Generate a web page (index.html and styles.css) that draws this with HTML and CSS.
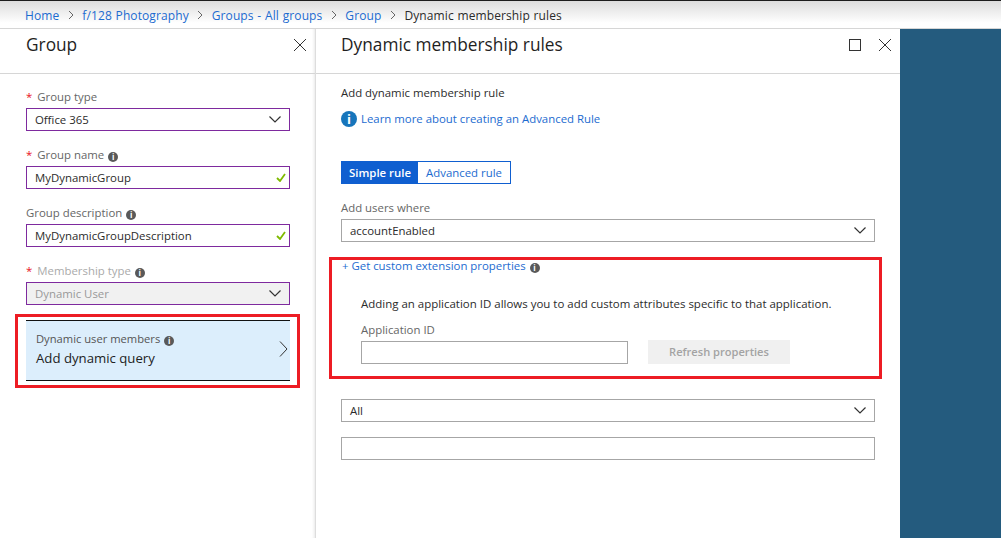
FILE: index.html
```html
<!DOCTYPE html>
<html lang="en">
<head>
  <meta charset="UTF-8">
  <title>Dynamic membership rules</title>
  <link rel="stylesheet" href="styles.css">
</head>
<body>
  <nav class="crumbs">
    <a href="#">Home</a>
    <svg class="crumb-sep" viewBox="0 0 6 10"><path d="M1 1l4 4-4 4"/></svg>
    <a href="#">f/128 Photography</a>
    <svg class="crumb-sep" viewBox="0 0 6 10"><path d="M1 1l4 4-4 4"/></svg>
    <a href="#">Groups - All groups</a>
    <svg class="crumb-sep" viewBox="0 0 6 10"><path d="M1 1l4 4-4 4"/></svg>
    <a href="#">Group</a>
    <svg class="crumb-sep" viewBox="0 0 6 10"><path d="M1 1l4 4-4 4"/></svg>
    <span>Dynamic membership rules</span>
  </nav>

  <div class="main">
    <section class="blade blade-left">
      <header class="blade-head">
        <h2>Group</h2>
        <svg class="head-icon" viewBox="0 0 12 12"><path d="M0 0l12 12M12 0L0 12"/></svg>
      </header>
      <div class="blade-body form">
        <div class="field">
          <div class="label"><span class="star">*</span>Group type</div>
          <div class="box purple">Office 365
            <svg class="chev" viewBox="0 0 12 7"><path d="M.5.5L6 6 11.5.5"/></svg>
          </div>
        </div>
        <div class="field">
          <div class="label"><span class="star">*</span>Group name <span class="info">i</span></div>
          <div class="box purple">MyDynamicGroup
            <svg class="check" viewBox="0 0 10 9"><path d="M1 5l3 3 5-7"/></svg>
          </div>
        </div>
        <div class="field">
          <div class="label">Group description <span class="info">i</span></div>
          <div class="box purple">MyDynamicGroupDescription
            <svg class="check" viewBox="0 0 10 9"><path d="M1 5l3 3 5-7"/></svg>
          </div>
        </div>
        <div class="field">
          <div class="label muted"><span class="star">*</span>Membership type <span class="info">i</span></div>
          <div class="box purple disabled">Dynamic User
            <svg class="chev" viewBox="0 0 12 7"><path d="M.5.5L6 6 11.5.5"/></svg>
          </div>
        </div>
        <div class="query">
          <div>
            <div class="query-label">Dynamic user members <span class="info">i</span></div>
            <div class="query-value">Add dynamic query</div>
          </div>
          <svg class="query-arrow" viewBox="0 0 9 16"><path d="M1 .5L8 8l-7 7.5"/></svg>
        </div>
      </div>
    </section>

    <section class="blade blade-right">
      <header class="blade-head">
        <h2>Dynamic membership rules</h2>
        <span class="maximize"></span>
        <svg class="head-icon" viewBox="0 0 12 12"><path d="M0 0l12 12M12 0L0 12"/></svg>
      </header>
      <div class="blade-body rules">
        <div class="rule-title">Add dynamic membership rule</div>
        <div class="learn">
          <span class="info-big">i</span>
          <a href="#">Learn more about creating an Advanced Rule</a>
        </div>
        <div class="toggle">
          <span class="toggle-on">Simple rule</span>
          <span class="toggle-off">Advanced rule</span>
        </div>
        <div class="label where">Add users where</div>
        <div class="box grey">accountEnabled
          <svg class="chev" viewBox="0 0 12 7"><path d="M.5.5L6 6 11.5.5"/></svg>
        </div>
        <div class="custom-link"><a href="#">+ Get custom extension properties</a> <span class="info">i</span></div>
        <div class="custom">
          <div class="custom-text">Adding an application ID allows you to add custom attributes specific to that application.</div>
          <div class="label app-label">Application ID</div>
          <div class="app-row">
            <div class="box grey app-input"></div>
            <div class="refresh">Refresh properties</div>
          </div>
        </div>
        <div class="box grey all">All
          <svg class="chev" viewBox="0 0 12 7"><path d="M.5.5L6 6 11.5.5"/></svg>
        </div>
        <div class="box grey last"></div>
      </div>
    </section>

    <div class="backdrop"></div>
  </div>

  <!-- red annotation boxes drawn on top of the screenshot -->
  <div class="mark mark-query"></div>
  <div class="mark mark-custom"></div>
</body>
</html>
```

FILE: styles.css
```css
* {
  margin: 0;
  padding: 0;
  box-sizing: border-box;
}

body {
  width: 1001px;
  height: 538px;
  overflow: hidden;
  background-color: #fff;
  color: #2b2b2b;
  font-family: "Open Sans", "Liberation Sans", sans-serif;
  font-size: 11.4px;
}

a {
  color: #1c6bd0;
  text-decoration: none;
}

/* Breadcrumb */
.crumbs {
  height: 29px;
  padding: 1px 0 0 25px;
  display: flex;
  align-items: center;
  gap: 8.5px;
  border-top: 1px solid #1c1c1c;
  border-bottom: 1px solid #d6d6d6;
  background: linear-gradient(#dcdcdc, #fff 22px);
  font-size: 12px;
  letter-spacing: .1px;
  word-spacing: .5px;
  white-space: nowrap;
}

.crumb-sep {
  width: 6px;
  height: 10px;
  fill: none;
  stroke: #666;
}

/* Blades */
.main {
  display: flex;
  height: 509px;
}

.blade {
  display: flex;
  flex-direction: column;
}

.blade-left {
  width: 316px;
  border-right: 1px solid #ddd;
  box-shadow: inset -3px 0 3px -2px #e8e8e8;
}

.blade-right {
  width: 584px;
}

.blade-head {
  height: 45px;
  padding: 0 9px 12px 26px;
  display: flex;
  align-items: center;
  border-bottom: 1px solid #d6d6d6;
}

.blade-right .blade-head {
  padding-left: 25px;
}

.blade-head h2 {
  flex: 1;
  margin-top: -2px;
  font-size: 17.3px;
  font-weight: 400;
  color: #1f1f1f;
}

.head-icon {
  width: 12px;
  height: 12px;
  fill: none;
  stroke: #333;
}

.maximize {
  width: 12px;
  height: 12px;
  margin-right: 18px;
  border: 1px solid #333;
}

/* Left form */
.form {
  padding: 12px 25px 0 26px;
}

.field {
  margin-bottom: 13px;
}

.label {
  height: 22px;
  padding-top: 2px;
  color: #666;
  line-height: 17px;
  white-space: nowrap;
}

.label.muted {
  color: #aaa;
}

.star {
  margin-right: 5px;
  color: #e81123;
}

.info {
  display: inline-block;
  width: 10px;
  height: 10px;
  margin-left: 1px;
  border-radius: 50%;
  background-color: #595959;
  color: #fff;
  font-size: 8px;
  font-weight: 700;
  line-height: 10px;
  text-align: center;
  vertical-align: -1px;
}

.box {
  position: relative;
  height: 23px;
  padding: 0 8px;
  display: flex;
  align-items: center;
  justify-content: space-between;
  background-color: #fff;
  color: #2b2b2b;
}

.purple {
  border: 1px solid #7e2a9e;
}

.grey {
  border: 1px solid #a6a6a6;
}

.disabled {
  background-color: #f1f1f1;
  color: #999;
}

.chev {
  width: 12px;
  height: 7px;
  fill: none;
  stroke: #333;
  stroke-width: 1.2;
}

.check {
  width: 10px;
  height: 9px;
  margin-right: -5px;
  fill: none;
  stroke: #7fba00;
  stroke-width: 1.8;
}

.query {
  height: 61px;
  margin-top: 15px;
  padding: 0 2px 4px 10px;
  display: flex;
  align-items: center;
  justify-content: space-between;
  border-top: 1px solid #111;
  border-bottom: 1px solid #111;
  background-color: #dceefc;
}

.query-label {
  color: #555;
  font-size: 11.2px;
  line-height: 17px;
}

.query-value {
  margin-top: 2px;
  color: #222;
  font-size: 13.2px;
}

.query-arrow {
  width: 9px;
  height: 16px;
  fill: none;
  stroke: #333;
}

/* Right form */
.rules {
  padding: 10px 25px 0 25px;
}

.rule-title {
  line-height: 18px;
}

.learn {
  height: 17px;
  margin-top: 8px;
  display: flex;
  align-items: center;
  gap: 4px;
}

.info-big {
  width: 16px;
  height: 16px;
  border-radius: 50%;
  background-color: #1775bb;
  color: #fff;
  font-size: 13px;
  font-weight: 700;
  line-height: 16px;
  text-align: center;
}

.toggle {
  width: 170px;
  height: 23px;
  margin-top: 34px;
  display: flex;
  border: 1px solid #0f5fd0;
  line-height: 21px;
  text-align: center;
}

.toggle-on {
  width: 76px;
  background-color: #0f5fd0;
  color: #fff;
  font-weight: 600;
}

.toggle-off {
  flex: 1;
  color: #1c6bd0;
}

.where {
  height: 21px;
  margin-top: 14px;
  padding-top: 1px;
}

.custom-link {
  margin: 16px 0 0 1px;
  line-height: 16px;
}

.custom {
  padding: 21px 0 0 20px;
}

.custom-text {
  font-size: 11.47px;
  line-height: 17px;
}

.app-label {
  height: 21px;
  margin-top: 7px;
}

.app-row {
  display: flex;
  align-items: center;
  gap: 20px;
}

.app-input {
  width: 267px;
}

.refresh {
  width: 142px;
  height: 24px;
  background-color: #f0f0f0;
  color: #a3a3a3;
  font-size: 11.1px;
  font-weight: 600;
  line-height: 24px;
  text-align: center;
}

.all {
  margin-top: 35px;
}

.last {
  margin-top: 15px;
}

.backdrop {
  flex: 1;
  background-color: #245b7e;
}

/* Annotation boxes */
.mark {
  position: absolute;
  border: 3px solid #ed1c24;
}

.mark-query {
  left: 15px;
  top: 314px;
  width: 285px;
  height: 74px;
}

.mark-custom {
  left: 329px;
  top: 257px;
  width: 553px;
  height: 122px;
}
```
